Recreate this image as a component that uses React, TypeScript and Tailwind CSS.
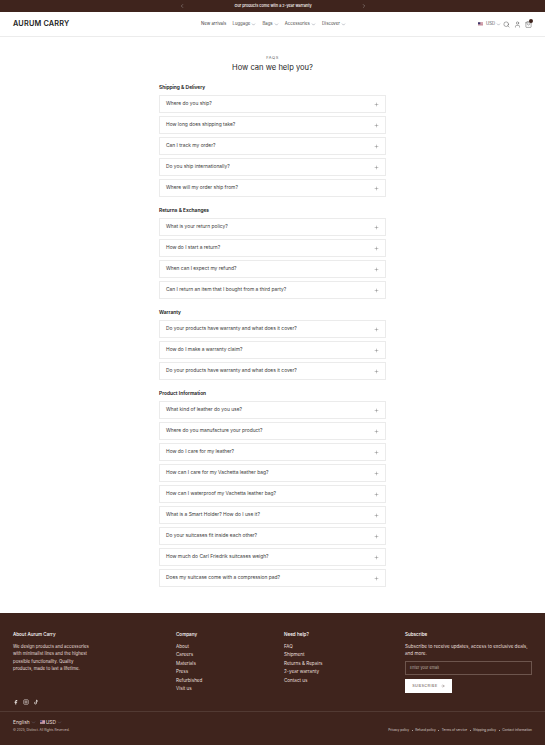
import React from 'react';
import { ChevronLeft, ChevronRight, ChevronDown, Plus, Search, User, ShoppingBag, ArrowRight } from 'lucide-react';

const sections = [
  {
    title: 'Shipping & Delivery',
    items: ['Where do you ship?', 'How long does shipping take?', 'Can I track my order?', 'Do you ship internationally?', 'Where will my order ship from?'],
  },
  {
    title: 'Returns & Exchanges',
    items: ['What is your return policy?', 'How do I start a return?', 'When can I expect my refund?', 'Can I return an item that I bought from a third party?'],
  },
  {
    title: 'Warranty',
    items: ['Do your products have warranty and what does it cover?', 'How do I make a warranty claim?', 'Do your products have warranty and what does it cover?'],
  },
  {
    title: 'Product Information',
    items: [
      'What kind of leather do you use?',
      'Where do you manufacture your product?',
      'How do I care for my leather?',
      'How can I care for my Vachetta leather bag?',
      'How can I waterproof my Vachetta leather bag?',
      'What is a Smart Holder? How do I use it?',
      'Do your suitcases fit inside each other?',
      'How much do Carl Friedrik suitcases weigh?',
      'Does my suitcase come with a compression pad?',
    ],
  },
];

const company = ['About', 'Careers', 'Materials', 'Press', 'Refurbished', 'Visit us'];
const help = ['FAQ', 'Shipment', 'Returns & Repairs', '2-year warranty', 'Contact us'];
const legal = ['Privacy policy', 'Refund policy', 'Terms of service', 'Shipping policy', 'Contact information'];

const Flag = ({ className }: { className: string }) => (
  <svg viewBox="0 0 12 8" className={className}>
    <rect width="12" height="8" fill="#e8e8ee" />
    <rect y="0" width="12" height="1" fill="#b4485a" />
    <rect y="2" width="12" height="1" fill="#b4485a" />
    <rect y="4" width="12" height="1" fill="#b4485a" />
    <rect y="6" width="12" height="1" fill="#b4485a" />
    <rect width="5.5" height="4.5" fill="#3c3b6e" />
  </svg>
);

const NavItem = ({ label, caret }: { label: string; caret?: boolean }) => (
  <span className="flex items-center gap-[1px]">
    {label}
    {caret && <ChevronDown className="w-[5px] h-[5px] text-gray-500" strokeWidth={2} />}
  </span>
);

const FaqRow = ({ question }: { question: string }) => (
  <div className="h-[18px] flex items-center justify-between border border-[#ebebeb] pl-[6px] pr-[6px] text-[4.9px] text-[#3a3a3a]">
    <span>{question}</span>
    <Plus className="w-[5px] h-[5px] text-[#555]" strokeWidth={1.6} />
  </div>
);

export default function App() {
  return (
    <div className="w-[545px] font-['Inter',sans-serif] bg-white pb-[7px]">
      <div className="h-[12px] bg-[#3f241d] flex items-center justify-center gap-[50px] text-white text-[3.8px] font-medium">
        <ChevronLeft className="w-[6px] h-[6px] text-[#bbb]" strokeWidth={1.5} />
        <span className="w-[76px] text-center whitespace-nowrap">Our products come with a 2-year warranty</span>
        <ChevronRight className="w-[6px] h-[6px] text-[#bbb]" strokeWidth={1.5} />
      </div>

      <header className="h-[25px] border-b border-[#ececec] px-[13px] flex items-center justify-between relative">
        <span className="text-[7.3px] font-semibold tracking-[0.2px] text-[#1c1c1c]">AURUM CARRY</span>
        <nav className="absolute left-[201px] top-0 h-[24px] flex items-center gap-[6.2px] text-[4.3px] text-[#444]">
          <NavItem label="New arrivals" />
          <NavItem label="Luggage" caret />
          <NavItem label="Bags" caret />
          <NavItem label="Accessories" caret />
          <NavItem label="Discover" caret />
        </nav>
        <div className="flex items-center gap-[2px] text-[#333]">
          <span className="flex items-center gap-[3px] text-[4.3px] text-[#555]">
            <Flag className="w-[5px] h-[4px]" />
            <NavItem label="USD" caret />
          </span>
          <div className="flex items-center gap-[4px]">
            <Search className="w-[7px] h-[7px]" strokeWidth={1.4} />
            <User className="w-[7px] h-[7px]" strokeWidth={1.4} />
            <span className="relative">
              <ShoppingBag className="w-[7px] h-[7px]" strokeWidth={1.4} />
              <span className="absolute -top-[2px] -right-[1px] w-[4px] h-[4px] rounded-full bg-[#3f241d]" />
            </span>
          </div>
        </div>
      </header>

      <main className="pt-[17px] pb-[26px] flex flex-col items-center">
        <div className="text-[4px] tracking-[0.6px] text-[#666] leading-[6px] mt-[1px]">FAQS</div>
        <h1 className="text-[7.6px] leading-[13px] text-[#1e1e1e]">How can we help you?</h1>
        <div className="w-[227px] mt-[9px] flex flex-col gap-[9px]">
          {sections.map((section) => (
            <section key={section.title}>
              <h2 className="text-[4.9px] leading-[8px] font-semibold text-[#111] mb-[4px]">{section.title}</h2>
              <div className="flex flex-col gap-[3px]">
                {section.items.map((q, i) => (
                  <FaqRow key={i} question={q} />
                ))}
              </div>
            </section>
          ))}
        </div>
      </main>

      <footer className="bg-[#3f241d] text-[#e6dfdb] h-[132px] flex flex-col text-[4.6px]">
        <div className="px-[13px] pt-[18px] grid grid-cols-[163px_108px_121px_127px] h-[99px] border-b border-[#523a33] relative">
          <div>
            <h3 className="font-medium text-white leading-[8px] mb-[4px]">About Aurum Carry</h3>
            <p className="leading-[7.3px] w-[80px] text-[4.35px]">We design products and accessories with minimalist lines and the highest possible functionality. Quality products, made to last a lifetime.</p>
            <div className="absolute left-[13px] top-[86px] flex items-center gap-[4px]">
              <svg viewBox="0 0 24 24" className="w-[6px] h-[6px]" fill="currentColor"><path d="M14 8h3V4h-3c-2.8 0-5 2.2-5 5v2H6v4h3v7h4v-7h3l1-4h-4V9c0-.6.4-1 1-1z" /></svg>
              <svg viewBox="0 0 24 24" className="w-[6px] h-[6px]" fill="none" stroke="currentColor" strokeWidth="2.4"><rect x="3" y="3" width="18" height="18" rx="3" /><circle cx="12" cy="12" r="4" /></svg>
              <svg viewBox="0 0 24 24" className="w-[6px] h-[6px]" fill="none" stroke="currentColor" strokeWidth="3"><path d="M14 3v13a4 4 0 1 1-4-4M14 4c.5 3 2.5 5 6 5" /></svg>
            </div>
          </div>
          <div>
            <h3 className="font-medium text-white leading-[8px] mb-[4px]">Company</h3>
            {company.map((l) => <div key={l} className="leading-[8.4px]">{l}</div>)}
          </div>
          <div>
            <h3 className="font-medium text-white leading-[8px] mb-[4px]">Need help?</h3>
            {help.map((l) => <div key={l} className="leading-[8.4px]">{l}</div>)}
          </div>
          <div>
            <h3 className="font-medium text-white leading-[8px] mb-[4px]">Subscribe</h3>
            <p className="leading-[7.3px]">Subscribe to receive updates, access to exclusive deals, and more.</p>
            <div className="h-[14px] mt-[3px] border border-[#6d554d] flex items-center px-[4px] text-[3.8px] text-[#b9aca6]">Enter your email</div>
            <div className="w-[47px] h-[14px] mt-[4px] bg-white text-[#5a4a45] text-[3.8px] tracking-[0.5px] flex items-center justify-center gap-[3px]">
              SUBSCRIBE
              <ArrowRight className="w-[4px] h-[4px]" strokeWidth={2} />
            </div>
          </div>
        </div>
        <div className="px-[13px] pt-[6px] flex justify-between items-start h-[24px]">
          <div>
            <div className="flex items-center gap-[4px] leading-[8px] text-[4.9px]">
              <NavItem label="English" caret />
              <span className="flex items-center gap-[1px]"><Flag className="w-[5px] h-[4px]" /><NavItem label="USD" caret /></span>
            </div>
            <div className="text-[3.2px] leading-[8px] text-[#c8bcb6]">© 2025, Distinct. All Rights Reserved.</div>
          </div>
          <div className="flex items-center gap-[2.5px] text-[3.2px] leading-[8px] mt-[8px] text-[#d5cbc6]">
            {legal.map((l, i) => (
              <React.Fragment key={l}>
                {i > 0 && <span className="w-[1px] h-[1px] rounded-full bg-[#d5cbc6]" />}
                <span>{l}</span>
              </React.Fragment>
            ))}
          </div>
        </div>
      </footer>
    </div>
  );
}
